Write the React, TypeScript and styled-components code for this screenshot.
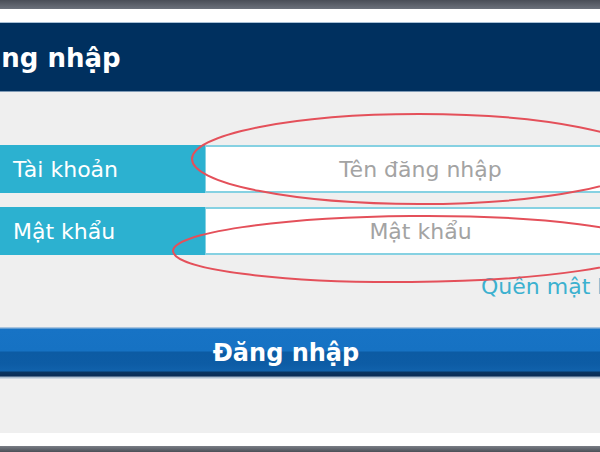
import styled, { createGlobalStyle } from 'styled-components'

const GlobalStyle = createGlobalStyle`
  html, body {
    margin: 0;
    padding: 0;
  }
  body {
    font-family: "DejaVu Sans", "Liberation Sans", sans-serif;
    background: #efefef;
  }
`

const Page = styled.div`
  position: relative;
  width: 600px;
  height: 452px;
  overflow: hidden;
  display: flex;
  flex-direction: column;
  background: #efefef;
`

const WindowBar = styled.div<{ $bottom?: boolean }>`
  height: ${p => (p.$bottom ? 6 : 9)}px;
  flex-shrink: 0;
  background: ${p =>
    p.$bottom
      ? 'linear-gradient(to bottom, #7a7e86, #4b4f57)'
      : 'linear-gradient(to bottom, #4a4e57, #6c717b)'};
`

const WhiteStrip = styled.div<{ $h: number }>`
  height: ${p => p.$h}px;
  flex-shrink: 0;
  background: #ffffff;
`

const Header = styled.div`
  height: 68px;
  flex-shrink: 0;
  border-top: 1px solid #a9c0d6;
  border-bottom: 1px solid #7f9ab5;
  box-shadow: 0 1px 0 #c9d1d9;
  background: #00305f;
  display: flex;
  align-items: center;
  overflow: hidden;
`

const Title = styled.h1`
  margin: 2px 0 0 -38px;
  font-size: 26px;
  font-weight: bold;
  color: #ffffff;
  white-space: nowrap;
`

const Body = styled.div`
  flex: 1;
  display: flex;
  flex-direction: column;
  padding-top: 53px;
  background: #efefef;
`

const Row = styled.div`
  display: flex;
  height: 48px;
  margin-bottom: 14px;
`

const Label = styled.div`
  width: 205px;
  flex-shrink: 0;
  box-sizing: border-box;
  padding-left: 13px;
  background: #2cb1d0;
  color: #ffffff;
  font-size: 22px;
  display: flex;
  align-items: center;
`

const Field = styled.input`
  flex: 1;
  min-width: 0;
  box-sizing: border-box;
  border: 2px solid #86d1e2;
  border-left-width: 1px;
  border-right: none;
  background: #ffffff;
  padding: 0 0 0 35px;
  font-family: "DejaVu Sans", "Liberation Sans", sans-serif;
  font-size: 22px;
  text-align: center;
  outline: none;
  &::placeholder {
    color: #a3a3a3;
  }
`

const Forgot = styled.a`
  align-self: flex-start;
  margin: 5px 0 0 481px;
  height: 26px;
  line-height: 26px;
  font-size: 22px;
  color: #3cb1cf;
  white-space: nowrap;
  text-decoration: none;
`

const SubmitButton = styled.button`
  margin-top: 27px;
  height: 52px;
  width: 100%;
  border: none;
  padding: 0 28px 0 0;
  font-family: "DejaVu Sans", "Liberation Sans", sans-serif;
  font-size: 24px;
  font-weight: bold;
  color: #ffffff;
  background: linear-gradient(
    to bottom,
    #a9c4de 0px,
    #a9c4de 1px,
    #1773c5 2px,
    #1672c3 24px,
    #0c5ba3 25px,
    #0d5ca5 37px,
    #1162ac 44px,
    #0a3561 45px,
    #0a2c55 49px,
    #9fb3c8 50px,
    #dfe5ea 52px
  );
`

const Spacer = styled.div`
  flex: 1;
`

const Annotation = styled.svg`
  position: absolute;
  left: 0;
  top: 0;
  pointer-events: none;
`

export default function App() {
  return (
    <>
      <GlobalStyle />
      <Page>
        <WindowBar />
        <WhiteStrip $h={13} />
        <Header>
          <Title>Đăng nhập</Title>
        </Header>
        <Body>
          <Row>
            <Label>Tài khoản</Label>
            <Field placeholder="Tên đăng nhập" />
          </Row>
          <Row>
            <Label>Mật khẩu</Label>
            <Field type="password" placeholder="Mật khẩu" />
          </Row>
          <Forgot href="#">Quên mật khẩu?</Forgot>
          <SubmitButton>Đăng nhập</SubmitButton>
          <Spacer />
        </Body>
        <WhiteStrip $h={13} />
        <WindowBar $bottom />
        <Annotation width="600" height="452" viewBox="0 0 600 452">
          <ellipse cx="419" cy="159" rx="227" ry="45" fill="none" stroke="#e4505a" strokeWidth="2" />
          <ellipse
            cx="411"
            cy="249"
            rx="238"
            ry="33"
            fill="none"
            stroke="#e4505a"
            strokeWidth="2"
            transform="rotate(-0.5 411 249)"
          />
        </Annotation>
      </Page>
    </>
  )
}
